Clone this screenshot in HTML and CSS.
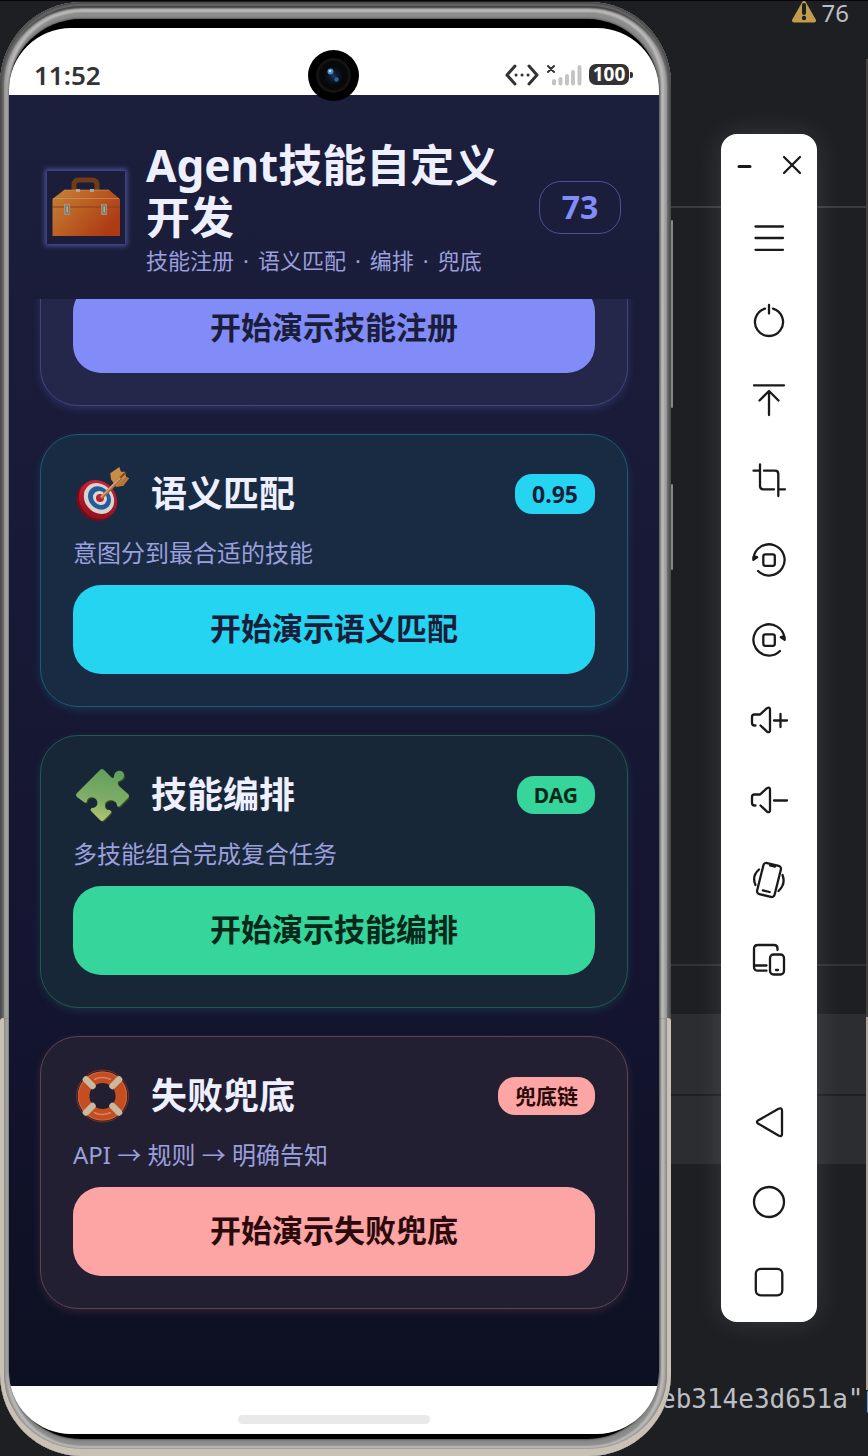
FILE: index.html
```html
<!DOCTYPE html>
<html lang="zh-CN">
<head>
<meta charset="utf-8">
<meta name="viewport" content="width=device-width, initial-scale=1">
<title>Agent技能自定义开发</title>
<link rel="stylesheet" href="styles.css">
</head>
<body>
<div class="desktop">
  <div class="editor">
    <div class="warnings">
      <svg width="26" height="22" viewBox="0 0 26 22"><path d="M13 2 23 19.500H3z" fill="#c29d4d" stroke="#c29d4d" stroke-width="4" stroke-linejoin="round"/><path d="M13 4v8" stroke="#1e1f22" stroke-width="4" stroke-linecap="round"/><circle cx="13" cy="17" r="2.200" fill="#1e1f22"/></svg>
      <span>76</span>
    </div>
    <code class="code-line">eb314e3d651a"</code>
    <span class="edge-char">自</span>
  </div>

  <div class="phone">
    <i class="side-key key-volume"></i>
    <i class="side-key key-power"></i>
    <div class="bezel">
      <div class="screen">
        <div class="status">
          <time class="clock">11:52</time>
          <div class="status-icons">
            <svg width="34" height="24" viewBox="0 0 34 24" fill="none" stroke="#333" stroke-width="3" stroke-linecap="round" stroke-linejoin="round"><path d="M10 3 2 12l8 9M24 3l8 9-8 9"/><path d="M11 12h.1M17 12h.1M23 12h.1"/></svg>
            <svg width="36" height="24" viewBox="0 0 36 24" fill="none" stroke-linecap="round"><path d="m2 3 6 6M8 3 2 9" stroke="#333" stroke-width="2"/><path d="M8 18v2.500M14.500 16v4.500M21 13v7.500M27 9v11.500M33.500 4v16.500" stroke="#c4c4c4" stroke-width="4"/></svg>
            <span class="battery">100</span>
          </div>
          <svg class="camera" width="51" height="51" viewBox="0 0 51 51">
            <defs><radialGradient id="lens"><stop offset="0" stop-color="#1c3f6b"/><stop offset=".4" stop-color="#0c1b33"/><stop offset="1" stop-color="#080b12"/></radialGradient></defs>
            <circle cx="25.500" cy="25.500" r="25.500" fill="#000"/><circle cx="25.500" cy="25.500" r="16" fill="#080808" stroke="#131313" stroke-width="3"/><circle cx="25.500" cy="26" r="9" fill="url(#lens)"/><circle cx="22.500" cy="21.500" r="3" fill="#4e8cc0"/><circle cx="22" cy="21" r="1.300" fill="#b8dcf2"/><circle cx="28.500" cy="29.500" r="2.200" fill="#2b659f"/>
          </svg>
        </div>

        <div class="app">
          <header class="app-header">
            <div class="toolbox">
              <svg width="70" height="60" viewBox="0 0 70 60">
                <defs><linearGradient id="box" x1="0" y1="0" x2="1" y2=".6"><stop offset="0" stop-color="#c5823a"/><stop offset=".5" stop-color="#bb5f23"/><stop offset="1" stop-color="#ae3a16"/></linearGradient></defs>
                <path d="M23 15V9q0-5 5-5h13q5 0 5 5v6" fill="none" stroke="#6f3b18" stroke-width="5"/>
                <path d="M1.500 23 13 14h45l11 9v37h-67.500z" fill="url(#box)"/>
                <path d="M13 14h45M2 22.500h66" stroke="#dc9d65" stroke-width="1" opacity=".55"/><path d="M1.500 31H69" stroke="#87401a"/>
                <path d="M13 28h6v11h-6zM50 28h6v11h-6z" fill="#9c907d"/><path d="M15 30h2.500v7H15zM52 30h2.500v7H52z" fill="#b8ad9b" stroke="#6f6556" stroke-width=".8"/>
                <path d="M25 13h4v3h-4zM39 13h4v3h-4z" fill="#b1a58f"/>
              </svg>
            </div>
            <div class="heading">
              <h1>Agent技能自定义开发</h1>
              <p><span>技能注册</span><span>·</span><span>语义匹配</span><span>·</span><span>编排</span><span>·</span><span>兜底</span></p>
            </div>
            <span class="count">73</span>
          </header>

          <main class="cards">
            <section class="card card-register">
              <button class="action" type="button">开始演示技能注册</button>
            </section>

            <section class="card card-match">
              <div class="card-head">
                <svg class="emoji" width="56" height="54" viewBox="0 0 56 54">
                  <defs><linearGradient id="red" x1="0" y1="0" x2="1" y2="1"><stop stop-color="#d5253c"/><stop offset="1" stop-color="#880e1a"/></linearGradient></defs>
                  <ellipse cx="23" cy="34" rx="21" ry="18.500" transform="rotate(48 23 34)" fill="#790b18"/>
                  <ellipse cx="25" cy="32.500" rx="20.500" ry="18" transform="rotate(48 25 32.500)" fill="url(#red)"/>
                  <ellipse cx="26" cy="31.500" rx="16.500" ry="14" transform="rotate(48 26 31.500)" fill="#d8d3cb"/>
                  <ellipse cx="26.500" cy="31" rx="12.500" ry="10.500" transform="rotate(48 26.500 31)" fill="#245b9d"/>
                  <ellipse cx="27" cy="31" rx="7.500" ry="6.500" transform="rotate(48 27 31)" fill="#ddd7d0"/>
                  <circle cx="27" cy="31" r="4" fill="#bb2033"/>
                  <path d="m37.300 6.300 9-6.300 1.700 4.700h4l1 5 3 1.600-5.700 7.400-7.300 1-5-7.400z" fill="#c98d45"/>
                  <path d="m53 9.700 3 1.600-5.700 7.400-7.300 1z" fill="#b47535"/><path d="m45 13 7-7" stroke="#7d4724" stroke-width="2"/>
                  <path d="m28 31 20-20" stroke="#a86c40" stroke-width="3.500"/><path d="m28 30 19-19" stroke="#d9a678" stroke-width="1.500"/>
                </svg>
                <h2>语义匹配</h2>
                <span class="badge badge-score">0.95</span>
              </div>
              <p>意图分到最合适的技能</p>
              <button class="action" type="button">开始演示语义匹配</button>
            </section>

            <section class="card card-flow">
              <div class="card-head">
                <svg class="emoji" width="56" height="54" viewBox="0 0 56 54">
                  <defs><linearGradient id="leaf" x1=".6" y1="0" x2=".4" y2="1"><stop stop-color="#5fa05c"/><stop offset=".6" stop-color="#80ad68"/><stop offset="1" stop-color="#b4c875"/></linearGradient></defs>
                  <path id="piece-shade" d="M27 2Q29 0 31 2L38 9q2 2 3 0c0-8 10-8 10-2s-5 5-6 7q-1 2 1 4l9 8q2 2 0 4l-8 8q-3 2-3-1c-1-7-13-6-12 1 0 5 5 3 6 5q1 1-1 3l-6 6q-2 2-4 0l-8-8q-3-3 0-4c5 0 6-4 5-7-2-6-10-4-10 0q-1 3-3 1L4 29q-2-2 0-4z" fill="#36521c" transform="translate(1 1)"/>
                  <path d="M27 2Q29 0 31 2L38 9q2 2 3 0c0-8 10-8 10-2s-5 5-6 7q-1 2 1 4l9 8q2 2 0 4l-8 8q-3 2-3-1c-1-7-13-6-12 1 0 5 5 3 6 5q1 1-1 3l-6 6q-2 2-4 0l-8-8q-3-3 0-4c5 0 6-4 5-7-2-6-10-4-10 0q-1 3-3 1L4 29q-2-2 0-4z" fill="url(#leaf)"/>
                </svg>
                <h2>技能编排</h2>
                <span class="badge">DAG</span>
              </div>
              <p>多技能组合完成复合任务</p>
              <button class="action" type="button">开始演示技能编排</button>
            </section>

            <section class="card card-fallback">
              <div class="card-head">
                <svg class="emoji" width="56" height="54" viewBox="0 0 56 54" fill="none">
                  <circle cx="29.500" cy="27" r="26" stroke="#753428" stroke-width="1"/><circle cx="29.500" cy="27" r="18.800" stroke="#c54d22" stroke-width="11.500"/><circle cx="29.500" cy="27" r="24" stroke="#d4602f" stroke-width="1.200"/><path d="M21 10.500q8-4 17 0M21 43.500q8 4 17 0" stroke="#db845d" stroke-width="1.500"/>
                  <path d="m13 10.500 6.500 6.500M46 10.500l-6.500 6.500M13 43.500l6.500-6.500M46 43.500l-6.500-6.500" stroke="#c8b9a0" stroke-width="6.500" stroke-linecap="round"/>
                </svg>
                <h2>失败兜底</h2>
                <span class="badge">兜底链</span>
              </div>
              <p>API → 规则 → 明确告知</p>
              <button class="action" type="button">开始演示失败兜底</button>
            </section>
          </main>
        </div>
        <div class="nav-area"><i class="home-bar"></i></div>
      </div>
    </div>
  </div>

  <aside class="toolbar">
    <div class="window-buttons">
      <button type="button" aria-label="最小化"><svg width="24" height="24" viewBox="0 0 24 24"><path d="M6 13.500h11" stroke-width="3"/></svg></button>
      <button type="button" aria-label="关闭"><svg width="24" height="24" viewBox="0 0 24 24"><path d="m4 4 16 16M20 4 4 20"/></svg></button>
    </div>
    <button type="button" aria-label="菜单"><svg width="40" height="40" viewBox="0 0 40 40"><path d="M6.500 6.500h27.500M6.500 18h27.500M6.500 29.800h27.500"/></svg></button>
    <button type="button" aria-label="电源"><svg width="40" height="40" viewBox="0 0 40 40"><path d="M16 8.600a14 14 0 1 0 8 0M20 5v8.500"/></svg></button>
    <button type="button" aria-label="上滑"><svg width="40" height="40" viewBox="0 0 40 40"><path d="M5 5.300h30M20 35V11.500M10.500 20.500l9.500-9.500 9.500 9.500"/></svg></button>
    <button type="button" aria-label="截屏"><svg width="40" height="40" viewBox="0 0 40 40"><path d="M11 4.500V26q0 3.300 3.300 3.300H25M4.500 10.700H11M15 10.700h11q3.300 0 3.300 3.300v22M29.300 29.300H36"/></svg></button>
    <button type="button" aria-label="向左旋转"><svg width="40" height="40" viewBox="0 0 40 40"><path d="M4.500 18a15.600 15.600 0 1 1 4.500 13"/><path d="m4.300 19.800 3.800-2.600-3.200-.8z" fill="#1a1a1a"/><rect x="14.300" y="14.300" width="11.500" height="11.500" rx="2"/></svg></button>
    <button type="button" aria-label="向右旋转"><svg width="40" height="40" viewBox="0 0 40 40"><path d="M35.500 18A15.600 15.600 0 1 0 31 31"/><path d="m35.700 19.800-3.800-2.600 3.200-.8z" fill="#1a1a1a"/><rect x="14.300" y="14.300" width="11.500" height="11.500" rx="2"/></svg></button>
    <button type="button" aria-label="增大音量"><svg width="40" height="40" viewBox="0 0 40 40"><path d="M6.500 25.500H5.500q-2.500 0-2.500-2.500v-6q0-2.500 2.500-2.500H11l7-6.300q3-1.500 3 1.500v20.500q0 3-3 1.500L11.500 25.500M25 20.500h13M31.500 14v13"/></svg></button>
    <button type="button" aria-label="减小音量"><svg width="40" height="40" viewBox="0 0 40 40"><path d="M6.500 25.500H5.500q-2.500 0-2.500-2.500v-6q0-2.500 2.500-2.500H11l7-6.300q3-1.500 3 1.500v20.500q0 3-3 1.500L11.500 25.500M25 20.500h13"/></svg></button>
    <button type="button" aria-label="摇一摇"><svg width="40" height="40" viewBox="0 0 40 40"><g transform="rotate(14 20 20)"><rect x="11" y="4" width="18" height="32" rx="3"/><path d="M16.500 31.500h7M17.500 5.500h5"/></g><path d="M10 9.500Q2.500 16 6.500 25M33.500 15q3.500 9-4 16"/></svg></button>
    <button type="button" aria-label="多设备"><svg width="40" height="40" viewBox="0 0 40 40"><path d="M17.500 30.700H9q-4 0-4-4V9q0-4 4-4h16q3.500 0 3.500 3.500v1.500M5 25.500h12.500"/><rect x="21" y="14.500" width="14" height="20" rx="3.500"/><path d="M27 30h2"/></svg></button>
    <div class="nav-keys">
      <button type="button" aria-label="返回"><svg width="40" height="40" viewBox="0 0 40 40"><path d="M9 18.500 29.500 6.800q3.500-1.500 3.500 1.800v23.300q0 3.300-3.500 1.600L9 21.500q-2.200-1.500 0-3z"/></svg></button>
      <button type="button" aria-label="主页"><svg width="40" height="40" viewBox="0 0 40 40"><circle cx="20" cy="20" r="15"/></svg></button>
      <button type="button" aria-label="最近任务"><svg width="40" height="40" viewBox="0 0 40 40"><rect x="6.800" y="6.800" width="26.500" height="26.500" rx="5"/></svg></button>
    </div>
  </aside>
</div>
</body>
</html>
```
FILE: styles.css
```css
* { box-sizing: border-box; margin: 0; padding: 0; }

body {
  background: #1e1f22;
  font-family: "Noto Sans", "Noto Sans CJK SC", sans-serif;
}

button { border: 0; background: none; font: inherit; cursor: pointer; }

.desktop {
  position: relative;
  display: flex;
  align-items: flex-start;
  min-height: 100vh;
  padding: 2px 51px 0 0;
  overflow: hidden;
}

/* Editor window behind the emulator */
.editor {
  position: absolute;
  inset: 0;
  border-top: 1px solid #050505;
  background:
    linear-gradient(#393b40, #393b40) 0 205px / 100% 2px no-repeat,
    linear-gradient(#303236, #303236) 0 963px / 100% 2px no-repeat,
    linear-gradient(#1e1f22, #1e1f22) 0 1093px / 100% 2px no-repeat,
    linear-gradient(#2b2d30, #2b2d30) 0 1013px / 100% 150px no-repeat,
    #1e1f22;
}
.editor::after {
  content: "";
  position: absolute;
  top: 58px;
  right: 0;
  bottom: 66px;
  width: 2px;
  background: linear-gradient(#42413f 0 958px, #aaa294 958px);
}
.warnings {
  position: absolute;
  top: 0;
  right: 19px;
  display: flex;
  gap: 5px;
  color: #bcbec4;
  font-size: 24px;
  line-height: 24px;
}
.code-line, .edge-char {
  position: absolute;
  top: 1382px;
  left: 660px;
  color: #bcbec4;
  font: 26px/32px "DejaVu Sans Mono", monospace;
}
.edge-char { left: 863px; font-family: "Noto Sans CJK SC", sans-serif; }

/* Emulated handset */
.phone {
  position: relative;
  flex: 1;
  display: flex;
  min-width: 0;
  height: calc(100vh - 2px);
  margin-right: 50px;
  padding: 17px 12px 17px 9px;
  border-radius: 82px;
  background: #8c8c8c;
  box-shadow:
    inset 0 0 2px 2px #4c4c4c,
    inset 0 0 1px 4px #6b6b6b,
    inset 0 4px 2px 2px #3b3b3b,
    inset 0 0 3px 7px #9a9a9a,
    inset 0 0 2px 10px #c2c1bf;
}
.phone::before {
  content: "";
  position: absolute;
  inset: 1016px 0 0;
  border: solid #c9c1b4;
  border-width: 0 4px 7px;
  border-radius: 3px 3px 82px 82px;
  box-shadow: inset 0 0 2px #776f63;
}
.side-key {
  position: absolute;
  right: -2px;
  width: 2px;
  border-radius: 1px;
  background: #858783;
}
.key-volume { top: 218px; height: 188px; }
.key-power { top: 482px; height: 86px; }

.bezel {
  position: relative;
  flex: 1;
  display: flex;
  min-width: 0;
  padding: 9px 0 5px;
  border-radius: 72px;
  background: #000;
  box-shadow: 0 0 3px #222;
}
.screen {
  flex: 1;
  display: flex;
  flex-direction: column;
  min-width: 0;
  border-radius: 62px;
  background: #fff;
  overflow: hidden;
}
.status {
  position: relative;
  z-index: 1;
  display: flex;
  justify-content: space-between;
  align-items: center;
  height: 67px;
  padding: 26px 28px 0 25px;
}
.clock { color: #333; font-size: 26px; line-height: 32px; font-weight: 600; }
.status-icons { display: flex; align-items: center; gap: 7px; }
.battery {
  position: relative;
  width: 40px;
  margin-right: 2px;
  border-radius: 7px;
  background: #333;
  color: #fff;
  font-size: 19px;
  font-weight: 700;
  line-height: 21px;
  text-align: center;
}
.battery::after {
  content: "";
  position: absolute;
  top: 8px;
  right: -4px;
  width: 3px;
  height: 6px;
  border-radius: 0 2px 2px 0;
  background: #333;
}
.camera { position: absolute; top: 22px; left: calc(50% - 26px); }

.app {
  flex: 1;
  display: flex;
  flex-direction: column;
  min-height: 0;
  background: linear-gradient(#1c1f3b, #191b38 25%, #151531 65%, #0d1022);
}
.app-header {
  display: flex;
  align-items: center;
  gap: 21px;
  padding: 43px 38px 22px;
}
.toolbox {
  display: flex;
  justify-content: center;
  align-items: flex-end;
  width: 78px;
  height: 73px;
  padding-bottom: 8px;
  background: #1b1d39;
  box-shadow: 0 0 5px 2px #4d539f;
}
.heading { flex: 1; min-width: 0; padding-top: 1px; }
.heading h1 { color: #eef0ff; font-size: 44px; line-height: 52px; }
.heading p { display: flex; gap: 9px; color: #9a9fdd; font-size: 22px; line-height: 34px; }
.count {
  width: 82px;
  padding-bottom: 2px;
  border: 1px solid #4c5195;
  border-radius: 22px;
  color: #818cf8;
  font-size: 32px;
  font-weight: 700;
  line-height: 49px;
  text-align: center;
}

.cards {
  flex: 1;
  display: flex;
  flex-direction: column;
  justify-content: flex-end;
  gap: 28px;
  min-height: 0;
  padding: 0 31px 77px;
  overflow: hidden;
}
.card {
  flex-shrink: 0;
  display: flex;
  flex-direction: column;
  gap: 14px;
  padding: 32px;
  border: 1px solid var(--edge);
  border-radius: 38px;
  background: var(--fill);
  box-shadow: 0 3px 8px var(--glow);
}
.card-register { --edge: #40457f; --fill: #24274a; --glow: #818cf833; --accent: #818cf8; --ink: #1b1e3a; }
.card-match { --edge: #1c5b75; --fill: #192a43; --glow: #22d3ee26; --accent: #24d4f0; --ink: #1b1e3a; }
.card-flow { --edge: #20594f; --fill: #182738; --glow: #34d39926; --accent: #35d59b; --ink: #06281a; }
.card-fallback { --edge: #5e4354; --fill: #231f32; --glow: #fca5a520; --accent: #fca5a4; --ink: #2b0a0c; }

.card-head { display: flex; align-items: center; height: 54px; }
.emoji { margin-right: 22px; }
.card-head h2 { flex: 1; color: #eef0ff; font-size: 36px; line-height: 54px; }
.card p { color: #9a9fdd; font-size: 24px; line-height: 36px; }
.badge {
  padding: 0 17px;
  border-radius: 17px;
  background: var(--accent);
  color: var(--ink);
  font-size: 21px;
  font-weight: 700;
  line-height: 38px;
}
.badge-score { font-size: 23px; line-height: 40px; }
.action {
  height: 89px;
  padding-bottom: 3px;
  border-radius: 28px;
  background: var(--accent);
  color: var(--ink);
  font-size: 31px;
  font-weight: 700;
  line-height: 40px;
}
.nav-area {
  display: flex;
  justify-content: center;
  align-items: flex-end;
  height: 48px;
  padding-bottom: 10px;
}
.home-bar { width: 192px; height: 9px; border-radius: 5px; background: #e9e9e9; }

/* Emulator controls */
.toolbar {
  position: relative;
  width: 96px;
  margin-top: 132px;
  border-radius: 16px;
  background: #fff;
  box-shadow: 0 0 28px #ffffff1f;
}
.toolbar button {
  display: flex;
  justify-content: center;
  align-items: center;
  width: 100%;
  height: 80px;
}
.toolbar svg {
  fill: none;
  stroke: #1a1a1a;
  stroke-width: 2.3;
  stroke-linecap: round;
  stroke-linejoin: round;
}
.toolbar .window-buttons {
  display: flex;
  justify-content: space-between;
  padding: 0 13px 4px 12px;
}
.toolbar .window-buttons button { width: 24px; height: 62px; }
.nav-keys { margin-top: 82px; }
```
